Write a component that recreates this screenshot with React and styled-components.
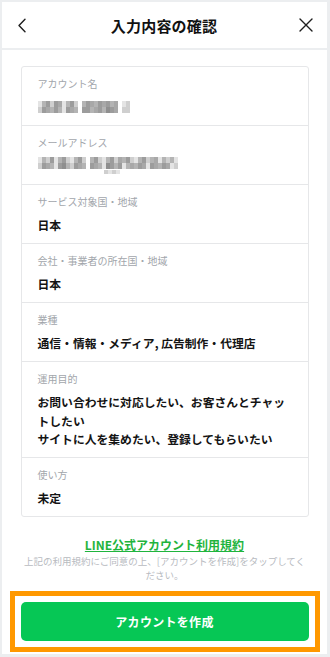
import React from 'react';
import styled, { createGlobalStyle } from 'styled-components';

const GlobalStyle = createGlobalStyle`
  html, body {
    margin: 0;
    padding: 0;
    background: #eceef0;
  }
  body {
    font-family: "Noto Sans CJK JP", "Noto Sans", "Liberation Sans", sans-serif;
    -webkit-font-smoothing: antialiased;
  }
`;

const Frame = styled.div`
  width: 330px;
  height: 657px;
  box-sizing: border-box;
  padding: 2px 3px 3px 2px;
  display: flex;
  flex-direction: column;
  gap: 2px;
  background: #eceef0;
  overflow: hidden;
`;

const Header = styled.header`
  height: 46px;
  flex-shrink: 0;
  background: #fff;
  display: flex;
  align-items: center;
  justify-content: space-between;
  padding: 0 13px 0 12px;
`;

const IconButton = styled.button`
  width: 16px;
  height: 16px;
  padding: 0;
  border: none;
  background: none;
  display: flex;
  align-items: center;
  justify-content: center;
  color: #1e1e1e;
`;

const Title = styled.h1`
  margin: 0;
  font-size: 15px;
  font-weight: 700;
  color: #111;
  letter-spacing: 0.2px;
`;

const Body = styled.main`
  flex: 1;
  min-height: 0;
  background: #fff;
  display: flex;
  flex-direction: column;
  align-items: center;
  padding-top: 16px;
`;

const Card = styled.section`
  width: 288px;
  box-sizing: border-box;
  border: 1px solid #e6e7e9;
  border-radius: 3px;
`;

const Row = styled.div`
  padding: 10px 8px 8.5px 16px;
  border-bottom: ${p => (p.$last ? 'none' : '1px solid #e6e7e9')};
`;

const Label = styled.div`
  font-size: 10px;
  line-height: 14px;
  color: #a2a6ab;
`;

const Value = styled.div`
  margin-top: 7px;
  font-size: 11.8px;
  line-height: 18.5px;
  font-weight: 700;
  color: #141414;
  min-height: 18.5px;
  display: flex;
  flex-direction: column;
  justify-content: center;
`;

const Line = styled.span`
  white-space: nowrap;
`;

const Terms = styled.div`
  width: 284px;
  margin-top: 18px;
  text-align: center;
  line-height: 16px;
`;

const TermsLink = styled.a`
  display: inline-block;
  font-size: 12px;
  line-height: 16px;
  font-weight: 700;
  color: #1fb43d;
  text-decoration: underline;
  text-underline-offset: 1px;
`;

const Note = styled.p`
  margin: 2px 0 0;
  font-size: 9.5px;
  line-height: 13.5px;
  color: #b8bbbf;
`;

const Highlight = styled.div`
  margin-top: 9px;
  width: 310px;
  box-sizing: border-box;
  border: 5px solid #ff9800;
  padding: 6px 6px;
  display: flex;
  justify-content: center;
`;

const PrimaryButton = styled.button`
  width: 288px;
  height: 39px;
  border: none;
  border-radius: 5px;
  background: #06c755;
  color: #fff;
  font-family: inherit;
  font-size: 12px;
  font-weight: 700;
  letter-spacing: 0.3px;
`;

const shades = ['#9c9c9c', '#b4b4b4', '#cfcfcf', '#a8a8a8', '#e4e4e4', '#8f8f8f', '#c2c2c2'];

function Mosaic({ cells, extra }) {
  const w = cells.length * 4;
  return (
    <svg width={w} height={extra ? 18 : 12} viewBox={`0 0 ${w} ${extra ? 18 : 12}`}>
      {cells.map((c, i) => (
        <g key={i}>
          {c[0] >= 0 && <rect x={i * 4} y={0} width={4} height={6} fill={shades[c[0]]} />}
          {c[1] >= 0 && <rect x={i * 4} y={6} width={4} height={6} fill={shades[c[1]]} />}
        </g>
      ))}
      {extra && extra.map((e, i) => (
        <rect key={'e' + i} x={e[0]} y={13} width={4} height={4} fill={shades[e[1]]} />
      ))}
    </svg>
  );
}

const nameCells = [
  [4, 2], [1, 0], [0, 3], [2, 1], [0, 0], [3, 1], [4, 4], [1, 0], [0, 3], [2, 1],
  [-1, -1], [1, 0], [0, 0], [3, 1], [1, 3], [0, 0], [3, 1], [0, 5], [1, 0], [3, 3],
  [-1, -1], [4, 2], [2, 2]
];

const mailCells = [
  [4, 2], [1, 0], [2, 3], [0, 1], [4, 4], [1, 0], [0, 5], [2, 1], [4, 2], [1, 0],
  [0, 3], [2, 1], [-1, -1], [1, 0], [0, 3], [2, 1], [4, 4], [1, 5], [0, 0], [2, 1],
  [3, 0], [1, 4], [0, 1], [2, 3], [4, 1], [1, 0], [0, 3], [2, 4], [1, 0], [3, 3],
  [4, 1], [1, 0], [2, 3], [1, 4], [4, 2]
];

const Back = () => (
  <svg width="10" height="15" viewBox="0 0 10 15" fill="none">
    <path d="M8 1.2 L2 7.5 L8 13.8" stroke="currentColor" strokeWidth="1.4" strokeLinecap="round" strokeLinejoin="round" />
  </svg>
);

const Close = () => (
  <svg width="14" height="14" viewBox="0 0 14 14" fill="none">
    <path d="M1 1 L13 13 M13 1 L1 13" stroke="currentColor" strokeWidth="1.4" strokeLinecap="round" />
  </svg>
);

const rows = [
  { label: 'アカウント名', value: <Mosaic cells={nameCells} /> },
  { label: 'メールアドレス', value: <Mosaic cells={mailCells} extra={[[66, 2], [70, 4], [74, 2], [78, 4]]} /> },
  { label: 'サービス対象国・地域', value: '日本' },
  { label: '会社・事業者の所在国・地域', value: '日本' },
  { label: '業種', value: '通信・情報・メディア, 広告制作・代理店' },
  {
    label: '運用目的',
    value: (
      <>
        <Line>お問い合わせに対応したい、お客さんとチャッ</Line>
        <Line>トしたい</Line>
        <Line>サイトに人を集めたい、登録してもらいたい</Line>
      </>
    ),
  },
  { label: '使い方', value: '未定' },
];

export default function App() {
  return (
    <>
      <GlobalStyle />
      <Frame>
        <Header>
          <IconButton aria-label="戻る"><Back /></IconButton>
          <Title>入力内容の確認</Title>
          <IconButton aria-label="閉じる"><Close /></IconButton>
        </Header>
        <Body>
          <Card>
            {rows.map((r, i) => (
              <Row key={r.label} $last={i === rows.length - 1}>
                <Label>{r.label}</Label>
                <Value>{r.value}</Value>
              </Row>
            ))}
          </Card>
          <Terms>
            <TermsLink href="#">LINE公式アカウント利用規約</TermsLink>
            <Note>上記の利用規約にご同意の上、[アカウントを作成]をタップしてください。</Note>
          </Terms>
          <Highlight>
            <PrimaryButton>アカウントを作成</PrimaryButton>
          </Highlight>
        </Body>
      </Frame>
    </>
  );
}
